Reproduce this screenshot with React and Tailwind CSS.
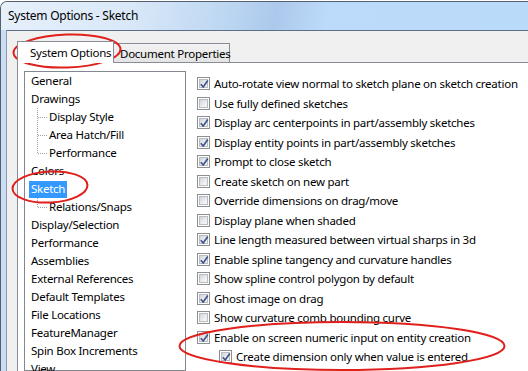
import React from "react";

const tree = [
  { label: "General" },
  { label: "Drawings" },
  { label: "Display Style", child: true },
  { label: "Area Hatch/Fill", child: true },
  { label: "Performance", child: true, last: true },
  { label: "Colors" },
  { label: "Sketch", selected: true },
  { label: "Relations/Snaps", child: true, last: true },
  { label: "Display/Selection" },
  { label: "Performance" },
  { label: "Assemblies" },
  { label: "External References" },
  { label: "Default Templates" },
  { label: "File Locations" },
  { label: "FeatureManager" },
  { label: "Spin Box Increments" },
  { label: "View" },
];

const options = [
  { label: "Auto-rotate view normal to sketch plane on sketch creation", checked: true },
  { label: "Use fully defined sketches", checked: false },
  { label: "Display arc centerpoints in part/assembly sketches", checked: true },
  { label: "Display entity points in part/assembly sketches", checked: true },
  { label: "Prompt to close sketch", checked: true },
  { label: "Create sketch on new part", checked: false },
  { label: "Override dimensions on drag/move", checked: false },
  { label: "Display plane when shaded", checked: false },
  { label: "Line length measured between virtual sharps in 3d", checked: true },
  { label: "Enable spline tangency and curvature handles", checked: true },
  { label: "Show spline control polygon by default", checked: false },
  { label: "Ghost image on drag", checked: true },
  { label: "Show curvature comb bounding curve", checked: false },
  { label: "Enable on screen numeric input on entity creation", checked: true },
  { label: "Create dimension only when value is entered", checked: true, indent: true },
];

function Checkbox({ checked }) {
  return (
    <div className="relative w-[13px] h-[13px] shrink-0 border border-[#8e8f8f] bg-white p-[1px]">
      <div className="w-full h-full border border-[#b9bdc3] bg-[linear-gradient(135deg,#d0d4da_0%,#eceef0_60%,#f8f8f8_100%)]" />
      {checked && (
        <svg className="absolute left-0 top-0" width="13" height="13" viewBox="0 0 13 13">
          <path d="M2.8 6.3 L5.2 9 L9.8 2.6" fill="none" stroke="#3f5489" strokeWidth="1.7" strokeLinejoin="round" />
        </svg>
      )}
    </div>
  );
}

function Connector({ last }) {
  return (
    <svg width="11" height="18" viewBox="0 0 11 18" className="shrink-0">
      <line x1="0.5" y1="0" x2="0.5" y2={last ? 9 : 18} stroke="#a0a0a0" strokeDasharray="1 1" />
      <line x1="1" y1="9.5" x2="10" y2="9.5" stroke="#a0a0a0" strokeDasharray="1 1" />
    </svg>
  );
}

export default function App() {
  return (
    <div className="relative w-[528px] h-[371px] overflow-hidden bg-white pt-px font-['Noto_Sans',sans-serif] text-[11.5px] tracking-[-0.25px] text-black">
      <div className="h-[370px] flex flex-col border-t border-l border-[#55606c] rounded-tl-[7px] bg-[#c9ddf4] overflow-hidden">
        <div className="h-[28px] shrink-0 flex items-center pl-[7px] text-[12px] bg-[linear-gradient(100deg,#e6f0fb_0%,#d9e8f8_25%,#b9d4f1_45%,#acc9ec_52%,#bcdaf9_62%,#badaf9_100%)]">
          <span className="leading-none">System Options - Sketch</span>
        </div>
        <div className="flex-1 flex pl-[5px] min-h-0">
          <div className="flex-1 flex flex-col border-l border-t border-l-[#8d9caf] border-t-[#5d6f86] bg-[#f0f0f0] pl-[10px] min-h-0">
            <div className="h-[31px] shrink-0 flex items-end">
              <div className="relative z-10 -mb-px h-[22px] w-[97px] shrink-0 border-x border-t border-[#898c95] bg-white flex items-center pl-[12px] whitespace-nowrap">
                System Options
              </div>
              <div className="h-[19px] w-[117px] shrink-0 -ml-px border-r border-t border-[#898c95] bg-[linear-gradient(#f3f3f3,#e4e4e4)] flex items-center pl-[7px] pt-[2px] whitespace-nowrap">
                Document Properties
              </div>
            </div>
            <div className="flex-1 flex border-l border-t border-[#898c95] bg-white pl-[6px] pt-[8px] min-h-0">
              <div className="w-[162px] shrink-0 border border-[#828790] bg-white flex flex-col">
                {tree.map((t, i) =>
                  t.child ? (
                    <div key={i} className="h-[18px] shrink-0 flex items-center pl-[12px] whitespace-nowrap">
                      <Connector last={t.last} />
                      <span className="ml-[1px]">{t.label}</span>
                    </div>
                  ) : (
                    <div key={i} className="h-[18px] shrink-0 flex items-center pl-[4px] whitespace-nowrap">
                      {t.selected ? (
                        <span className="h-[17px] flex items-center px-[2px] bg-[#3399ff] text-white">{t.label}</span>
                      ) : (
                        <span className="px-[2px]">{t.label}</span>
                      )}
                    </div>
                  )
                )}
              </div>
              <div className="flex-1 flex flex-col pl-[11px] pt-[3px]">
                {options.map((o, i) => (
                  <div
                    key={i}
                    className={
                      "h-[19.5px] shrink-0 flex items-center gap-[4px] whitespace-nowrap " +
                      (o.indent ? "pl-[22px]" : "")
                    }
                  >
                    <Checkbox checked={o.checked} />
                    <span>{o.label}</span>
                  </div>
                ))}
              </div>
            </div>
          </div>
        </div>
      </div>
      <svg className="absolute left-0 top-0 pointer-events-none" width="528" height="371" viewBox="0 0 528 371">
        <ellipse cx="67" cy="51" rx="53.5" ry="16.5" fill="none" stroke="#e0201c" strokeWidth="2" transform="rotate(-2 67 51)" />
        <ellipse cx="50" cy="187" rx="37.5" ry="15.5" fill="none" stroke="#e0201c" strokeWidth="2" transform="rotate(-3 50 187)" />
        <ellipse cx="342" cy="346" rx="162.5" ry="24" fill="none" stroke="#e0201c" strokeWidth="2" />
      </svg>
    </div>
  );
}
